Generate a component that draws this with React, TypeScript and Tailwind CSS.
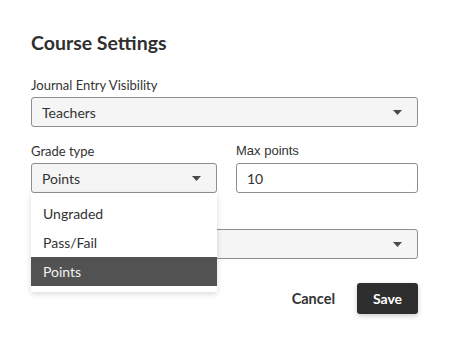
import { useState } from "react";

const font = "font-['Lato','Noto_Sans',sans-serif]";

function Caret() {
  return (
    <svg width="9" height="5" viewBox="0 0 9 5" className="shrink-0">
      <path d="M0 0h9L4.5 5z" fill="#4a4a4a" />
    </svg>
  );
}

function SelectBox({ value, open, children }: { value: string; open?: boolean; children?: React.ReactNode }) {
  return (
    <div className="relative">
      <button
        type="button"
        aria-expanded={open}
        className="flex h-[30px] w-full items-center justify-between rounded-[3px] border border-[#8f8f8f] bg-[#f5f5f5] pl-[10px] pr-[15px] text-left text-[14px] text-[#333]"
      >
        <span>{value}</span>
        <Caret />
      </button>
      {children}
    </div>
  );
}

function Label({ children, className = "" }: { children?: React.ReactNode; className?: string }) {
  return <div className={`mb-[4px] h-[16px] text-[13px] leading-[16px] text-[#333] ${className}`}>{children}</div>;
}

export default function App() {
  const options = ["Ungraded", "Pass/Fail", "Points"];
  const [grade] = useState("Points");

  return (
    <div className={`${font} min-h-[345px] w-[450px] bg-white px-[31px] pt-[31px] pr-[32px] text-[#333]`}>
      <h1 className="text-[19.5px] font-bold leading-[24px] text-[#2f2f2f]">Course Settings</h1>

      <div className="mt-[22px]">
        <Label>Journal Entry Visibility</Label>
        <SelectBox value="Teachers" />
      </div>

      <div className="mt-[16px] grid grid-cols-[186px_1fr] gap-x-[19px]">
        <div className="relative z-10">
          <Label>Grade type</Label>
          <SelectBox value={grade} open>
            <ul className="absolute left-0 top-full w-full bg-white py-[6px] shadow-[0_2px_6px_rgba(0,0,0,0.15)]">
              {options.map((o) => (
                <li
                  key={o}
                  className={`flex h-[29px] items-center px-[12px] text-[14px] ${
                    o === grade ? "bg-[#525252] text-[#f2f2f2]" : "text-[#333]"
                  }`}
                >
                  {o}
                </li>
              ))}
            </ul>
          </SelectBox>
        </div>
        <div>
          <Label className="font-['Liberation_Sans',Arial,sans-serif] text-[12px]">Max points</Label>
          <input
            defaultValue="10"
            className="h-[30px] w-full rounded-[3px] border border-[#8f8f8f] bg-white px-[10px] text-[14px] text-[#333] outline-none"
          />
        </div>
      </div>

      {/* label of this row sits under the open menu */}
      <div className="mt-[16px]">
        <Label />
        <SelectBox value="" />
      </div>

      <div className="mt-[24px] flex items-center justify-end gap-[10px]">
        <button type="button" className="px-[12px] text-[14.5px] font-bold text-[#333]">
          Cancel
        </button>
        <button
          type="button"
          className="h-[31px] w-[61px] rounded-[3px] bg-[#2e2e2e] text-[14px] font-bold text-white shadow-[0_2px_5px_rgba(0,0,0,0.2)]"
        >
          Save
        </button>
      </div>
    </div>
  );
}
